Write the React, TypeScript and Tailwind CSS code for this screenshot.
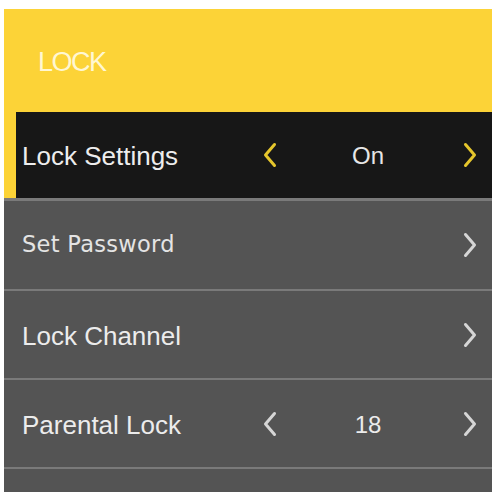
import React from "react";

function Chevron({ dir, color }: { dir: "left" | "right"; color: string }) {
  return (
    <svg width="16" height="26" viewBox="0 0 16 26" className="shrink-0">
      <path
        d={dir === "right" ? "M3.5 2.5 L12.5 13 L3.5 23.5" : "M12.5 2.5 L3.5 13 L12.5 23.5"}
        fill="none"
        stroke={color}
        strokeWidth="3"
        strokeLinecap="round"
        strokeLinejoin="round"
      />
    </svg>
  );
}

function Sep({ h = "h-[2px]" }: { h?: string }) {
  return <div className={`${h} bg-[#7a7a7a]`} />;
}

export default function App() {
  const sans = { fontFamily: '"Liberation Sans", Arial, sans-serif' };
  return (
    <div className="w-[495px] h-[495px] bg-white pt-[9px] pl-[4px] pr-[3px] pb-[3px]">
      <div className="w-full h-full flex flex-col bg-[#545454] overflow-hidden">
        {/* Header */}
        <div className="h-[103px] shrink-0 bg-[#fcd337] flex items-center pl-[34px] pt-[3px]">
          <span className="text-[27px] text-[#fff7d2] tracking-[-1.5px]" style={sans}>
            LOCK
          </span>
        </div>

        {/* Lock Settings (selected) */}
        <div className="h-[86px] shrink-0 flex bg-[#fcd337]">
          <div className="w-[12px] shrink-0" />
          <div className="flex-1 bg-[#171717] flex items-center pl-[6px] pr-[14px]">
            <span className="flex-1 text-[26px] text-[#ededed] pt-[3px]" style={sans}>
              Lock Settings
            </span>
            <div className="w-[216px] flex items-center">
              <Chevron dir="left" color="#e5c62c" />
              <span className="flex-1 text-center text-[24px] text-[#e6e6e6] pr-[4px] pt-[2px]" style={sans}>
                On
              </span>
              <Chevron dir="right" color="#e5c62c" />
            </div>
          </div>
        </div>
        <Sep h="h-[3px]" />

        {/* Set Password */}
        <div className="h-[88px] shrink-0 flex items-center pl-[18px] pr-[14px]">
          <span
            className="flex-1 text-[22.5px] text-[#e4e4e4] tracking-[0.3px]"
            style={{ fontFamily: '"DejaVu Sans", Verdana, sans-serif' }}
          >
            Set Password
          </span>
          <Chevron dir="right" color="#d6d6d6" />
        </div>
        <Sep />

        {/* Lock Channel */}
        <div className="h-[87px] shrink-0 flex items-center pl-[18px] pr-[14px]">
          <span className="flex-1 text-[26px] text-[#ececec] pt-[4px]" style={sans}>
            Lock Channel
          </span>
          <Chevron dir="right" color="#d6d6d6" />
        </div>
        <Sep />

        {/* Parental Lock */}
        <div className="h-[87px] shrink-0 flex items-center pl-[18px] pr-[14px]">
          <span className="flex-1 text-[26px] text-[#ececec] pt-[4px]" style={sans}>
            Parental Lock
          </span>
          <div className="w-[216px] flex items-center">
            <Chevron dir="left" color="#d6d6d6" />
            <span className="flex-1 text-center text-[24px] text-[#ececec] pr-[4px] pt-[2px]" style={sans}>
              18
            </span>
            <Chevron dir="right" color="#d6d6d6" />
          </div>
        </div>
        <Sep />

        <div className="flex-1" />
      </div>
    </div>
  );
}
